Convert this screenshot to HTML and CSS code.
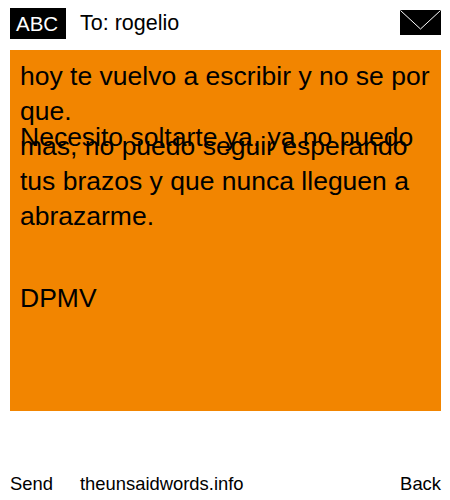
FILE: index.html
```html
<!DOCTYPE html>
<html lang="es">
<head>
<meta charset="utf-8">
<title>theunsaidwords.info</title>
<link rel="stylesheet" href="styles.css">
</head>
<body>
<div class="page">
  <header class="top">
    <div class="abc">ABC</div>
    <div class="to">To: rogelio</div>
    <svg class="env" width="41" height="25" viewBox="0 0 41 25" aria-hidden="true">
      <rect width="41" height="25" fill="#000"/>
      <path d="M0.5 0.5 L20.5 19 L40.5 0.5" fill="none" stroke="#fff" stroke-width="1"/>
    </svg>
  </header>
  <main class="note">
    <div class="line">hoy te vuelvo a escribir y no se por</div>
    <div class="line">que.</div>
    <div class="line squeezed">Necesito soltarte ya, ya no puedo</div>
    <div class="line">mas, no puedo seguir esperando</div>
    <div class="line">tus brazos y que nunca lleguen a</div>
    <div class="line">abrazarme.</div>
    <div class="line blank">&nbsp;</div>
    <div class="line">DPMV</div>
  </main>
  <footer class="bottom">
    <span class="send">Send</span>
    <span class="site">theunsaidwords.info</span>
    <span class="back">Back</span>
  </footer>
</div>
</body>
</html>
```
FILE: styles.css
```css
html, body { margin: 0; padding: 0; background: #fff; }
body { font-family: "Liberation Sans", Arial, sans-serif; color: #000; }
.page { width: 450px; height: 500px; display: flex; flex-direction: column; padding: 8px 9px 0 10px; box-sizing: border-box; overflow: hidden; }
.top { display: flex; align-items: flex-start; height: 31px; flex: none; }
.abc { width: 56px; height: 31px; padding-left: 6px; box-sizing: border-box; background: #000; color: #fff; font-size: 20.5px; line-height: 31px; }
.to { margin-left: 14px; font-size: 21.5px; line-height: 31px; flex: 1; }
.env { display: block; margin-top: 2px; }
.note { margin-top: 11px; height: 361px; background: #f28500; padding: 9px 10px 0; box-sizing: border-box; font-size: 26.5px; flex: none; }
.line { line-height: 35px; white-space: nowrap; }
.squeezed { margin-top: -9px; margin-bottom: -26px; }
.blank { line-height: 47px; }
.bottom { display: flex; margin-top: 62px; font-size: 18.4px; line-height: 21px; }
.site { margin-left: 27px; flex: 1; }
```
